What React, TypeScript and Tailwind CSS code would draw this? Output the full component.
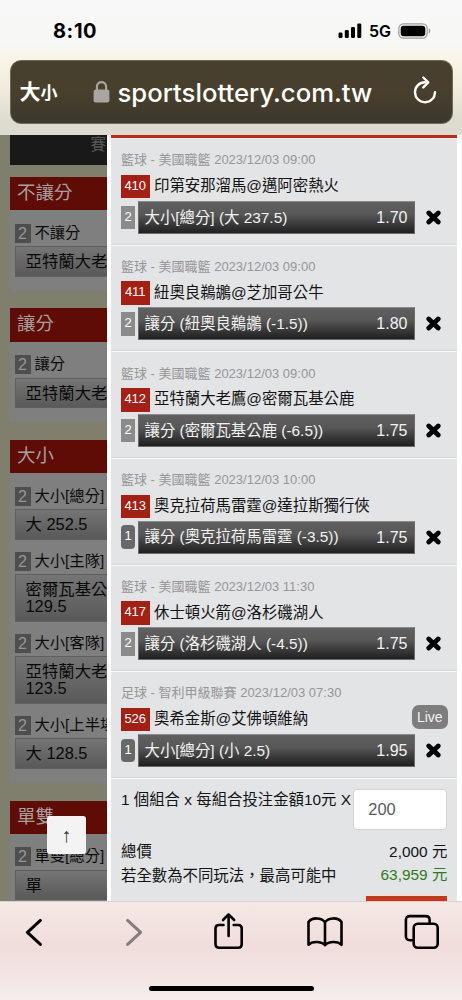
import React from 'react';

interface Bet {
  id: string;
  meta: string;
  teams: string;
  min: number;
  pick: string;
  odds: string;
  live?: boolean;
}

const bets: Bet[] = [
  { id: '410', meta: '籃球 - 美國職籃 2023/12/03 09:00', teams: '印第安那溜馬@邁阿密熱火', min: 2, pick: '大小[總分] (大 237.5)', odds: '1.70' },
  { id: '411', meta: '籃球 - 美國職籃 2023/12/03 09:00', teams: '紐奧良鵜鶘@芝加哥公牛', min: 2, pick: '讓分 (紐奧良鵜鶘 (-1.5))', odds: '1.80' },
  { id: '412', meta: '籃球 - 美國職籃 2023/12/03 09:00', teams: '亞特蘭大老鷹@密爾瓦基公鹿', min: 2, pick: '讓分 (密爾瓦基公鹿 (-6.5))', odds: '1.75' },
  { id: '413', meta: '籃球 - 美國職籃 2023/12/03 10:00', teams: '奧克拉荷馬雷霆@達拉斯獨行俠', min: 1, pick: '讓分 (奧克拉荷馬雷霆 (-3.5))', odds: '1.75' },
  { id: '417', meta: '籃球 - 美國職籃 2023/12/03 11:30', teams: '休士頓火箭@洛杉磯湖人', min: 2, pick: '讓分 (洛杉磯湖人 (-4.5))', odds: '1.75' },
  { id: '526', meta: '足球 - 智利甲級聯賽 2023/12/03 07:30', teams: '奧希金斯@艾佛頓維納', min: 1, pick: '大小[總分] (小 2.5)', odds: '1.95', live: true },
];

interface MarketItem {
  label: string;
  lines: string[];
}

const markets: { title: string; items: MarketItem[] }[] = [
  { title: '不讓分', items: [{ label: '不讓分', lines: ['亞特蘭大老'] }] },
  { title: '讓分', items: [{ label: '讓分', lines: ['亞特蘭大老'] }] },
  {
    title: '大小',
    items: [
      { label: '大小[總分]', lines: ['大 252.5'] },
      { label: '大小[主隊]', lines: ['密爾瓦基公', '129.5'] },
      { label: '大小[客隊]', lines: ['亞特蘭大老', '123.5'] },
      { label: '大小[上半場]', lines: ['大 128.5'] },
    ],
  },
  { title: '單雙', items: [{ label: '單雙[總分]', lines: ['單'] }] },
];

const StatusBar: React.FC = () => (
  <div className="flex h-[60px] items-center pl-[53px] pr-[31px] pt-[2px] text-black">
    <span className="text-[20px] font-bold leading-none tracking-[0.6px]">8:10</span>
    <svg className="ml-auto" width="24" height="16" viewBox="0 0 24 16">
      <rect x="0.5" y="9.5" width="4" height="5.5" rx="1.2" />
      <rect x="6.8" y="7" width="4" height="8" rx="1.2" />
      <rect x="13" y="4" width="4" height="11" rx="1.2" />
      <rect x="19.3" y="0.5" width="4" height="14.5" rx="1.2" />
    </svg>
    <span className="ml-[7px] text-[16px] font-semibold leading-none">5G</span>
    <svg className="ml-[7px]" width="33" height="16" viewBox="0 0 33 16">
      <rect x="0.8" y="0.8" width="28.4" height="14.4" rx="4.6" fill="none" stroke="#9b9b99" strokeWidth="1.2" />
      <rect x="2.7" y="2.7" width="24.6" height="10.6" rx="3" />
      <path d="M30.8 5.3c2 .8 2 4.6 0 5.4z" fill="#9b9b99" />
    </svg>
  </div>
);

const AddressBar: React.FC = () => (
  <div className="mx-[9.5px] flex h-[63.5px] items-center rounded-[11px] border border-[#6d6857] bg-linear-to-b from-[#47402f] via-[#483f2c] to-[#3d382d] text-white">
    <span className="-mt-[2px] ml-[9px] flex w-[42px] items-baseline font-['Noto_Sans_CJK_TC',sans-serif] font-bold leading-none">
      <span className="text-[21px]">大</span>
      <span className="text-[17px]">小</span>
    </span>
    <svg className="ml-[31px]" width="17" height="23" viewBox="0 0 17 23">
      <rect x="0.6" y="9.5" width="15.8" height="13" rx="2.2" fill="#a8a5a3" />
      <path d="M3.9 10.5V6.8c0-6.2 9.2-6.2 9.2 0v3.7" fill="none" stroke="#a8a5a3" strokeWidth="2.1" />
    </svg>
    <span className="ml-[8px] mt-[2px] whitespace-nowrap text-[25.7px] font-medium leading-none">sportslottery.com.tw</span>
    <svg className="mb-[3px] ml-auto mr-[14px]" width="26" height="28" viewBox="0 0 26 28" fill="none" stroke="#fff" strokeWidth="2.4" strokeLinecap="round" strokeLinejoin="round">
      <path d="M13 6.2A10 10 0 1 0 23 16.2" />
      <path d="M11.3 1.5 16.2 6.4 11.3 11.4" />
    </svg>
  </div>
);

const Market: React.FC<{ title: string; items: MarketItem[] }> = ({ title, items }) => (
  <section className="mb-[17.6px] w-[97.5px] shrink-0 overflow-hidden whitespace-nowrap bg-[#7f7f7f] pb-[5.9px]">
    <h2 className="h-[33.3px] bg-[#5f0b06] pl-[7.5px] text-[18.5px] leading-[32px] text-[#a5a09e]">{title}</h2>
    <div className="pt-[13.3px]">
      {items.map((item) => (
        <div key={item.label} className="mb-[8px] pb-[4.3px] pl-[5px] last:mb-[4px]">
          <div className="flex h-[19px] items-center text-[15.3px] text-[#0c0c0c]">
            <span className="mr-[4px] h-[19px] w-[16px] shrink-0 bg-[#4e4e4e] text-center text-[16px] leading-[19px] text-[#969696]">2</span>
            {item.label}
          </div>
          <div className="mt-[3.5px] border border-r-0 border-[#5f5f5f] bg-linear-to-b from-[#757575] to-[#595959] py-[6px] pl-[10px] text-[16.4px] leading-[16.6px] text-[#090909]">
            {item.lines.map((line) => (
              <div key={line}>{line}</div>
            ))}
          </div>
        </div>
      ))}
    </div>
  </section>
);

const CloseIcon: React.FC = () => (
  <svg width="15" height="15" viewBox="0 0 15 15" stroke="#000" strokeWidth="4.8" strokeLinecap="round">
    <path d="M2.8 3 12.2 12M12.2 3 2.8 12" />
  </svg>
);

const BetRow: React.FC<{ bet: Bet }> = ({ bet }) => (
  <div className="h-[106.63px] shrink-0 border-b border-[#fbfbfb] pl-[10px] pr-[9.5px] pt-[11.3px] shadow-[inset_0_-1px_0_#d4d5d7]">
    <div className="h-[20px] whitespace-nowrap text-[13px] leading-[20px] text-[#969698]">{bet.meta}</div>
    <div className="mt-[4.5px] flex h-[23.5px] items-center text-[15.4px] text-[#141414]">
      <span className="mr-[4.5px] h-[23.5px] w-[28.5px] shrink-0 bg-[#a51f14] text-center text-[13px] leading-[22px] text-white">{bet.id}</span>
      <span className="-mt-px whitespace-nowrap leading-[22px]">{bet.teams}</span>
      {bet.live && (
        <span className="-mt-[5px] ml-auto h-[24px] w-[36px] rounded-[7px] bg-[#7d7d7d] text-center text-[14px] leading-[24px] text-[#f3f3f3]">Live</span>
      )}
    </div>
    <div className="mt-[2.5px] flex h-[33px] items-center">
      <span className={`h-[23.5px] w-[14px] shrink-0 text-center text-[13px] leading-[22px] text-white ${bet.min === 1 ? 'rounded-[4px] bg-[#686868]' : 'bg-[#8b8b8b]'}`}>
        {bet.min}
      </span>
      <div className="ml-[2.5px] flex h-[33px] w-[277px] shrink-0 items-center justify-between border border-[#6a6a6a] border-t-[#8b8b8b] bg-linear-to-b from-[#606060] via-[#575757] via-40% to-[#202020] pl-[6px] pr-[6px] text-[#f2f2f2]">
        <span className="whitespace-nowrap text-[15.4px] leading-none">{bet.pick}</span>
        <span className="mt-px text-[16px] leading-none">{bet.odds}</span>
      </div>
      <div className="ml-[11.5px]">
        <CloseIcon />
      </div>
    </div>
  </div>
);

const BottomBar: React.FC = () => (
  <div className="h-[99px] border-t border-[#d8d3d2] bg-[linear-gradient(180deg,#f4e9e5_0%,#f1dddb_45%,#f2e3e1_70%,#f4eeed_100%)]">
    <div className="flex h-[60px] items-center justify-between pl-[24px] pr-[22px]">
      <svg width="20" height="30" viewBox="0 0 20 30" fill="none" stroke="#000" strokeWidth="3" strokeLinecap="round" strokeLinejoin="round">
        <path d="M16.4 3.4 3.4 15.4 16.4 27.4" />
      </svg>
      <svg className="ml-[20px]" width="20" height="30" viewBox="0 0 20 30" fill="none" stroke="#857c7c" strokeWidth="3" strokeLinecap="round" strokeLinejoin="round">
        <path d="M2.6 3.4 15.6 15.4 2.6 27.4" />
      </svg>
      <svg className="-mt-[2px] ml-[8px]" width="32" height="38" viewBox="0 0 32 38" fill="none" stroke="#000" strokeWidth="2.6" strokeLinecap="round" strokeLinejoin="round">
        <path d="M10.5 13H6.2Q2.5 13 2.5 16.2V32.3Q2.5 35.8 6.2 35.8H25.2Q28.7 35.8 28.7 32.3V16.2Q28.7 13 25.2 13H20.7" />
        <path d="M15.6 24V2.5M10 8 15.6 2.4 21.2 8" />
      </svg>
      <svg width="38" height="32" viewBox="0 0 38 32" fill="none" stroke="#000" strokeWidth="2.6" strokeLinecap="round" strokeLinejoin="round">
        <path d="M19 6.2V29.2M19 6.2C15.2 1.2 6 1.2 2.5 6V28.8C6 25 15.2 25 19 29.2C22.8 25 32 25 35.5 28.8V6C32 1.2 22.8 1.2 19 6.2Z" />
      </svg>
      <svg width="36" height="36" viewBox="0 0 36 36" fill="none" stroke="#000" strokeWidth="2.6" strokeLinejoin="round">
        <path d="M9.5 26.2H5.9Q1.9 26.2 1.9 22.2V6.1Q1.9 2.1 5.9 2.1H21.6Q25.6 2.1 25.6 6.1V9.8" />
        <rect x="9.7" y="9.8" width="24" height="24" rx="4" />
      </svg>
    </div>
    <div className="mx-auto mt-[23.5px] h-[5.5px] w-[165px] rounded-full bg-black" />
  </div>
);

const App: React.FC = () => {
  return (
    <div className="flex h-[1000px] w-[462px] flex-col overflow-hidden bg-white font-['Liberation_Sans','Noto_Sans_CJK_TC',sans-serif]">
      {/* Browser chrome */}
      <header className="h-[135px] bg-[linear-gradient(180deg,#f8f8f8_0%,#f7f7f5_33%,#f8f4e6_45%,#f1ecdd_65%,#dedbd0_88%,#dddad2_100%)] font-[Inter,sans-serif]">
        <StatusBar />
        <AddressBar />
      </header>

      <main className="relative flex h-[766px] overflow-hidden">
        {/* Dimmed odds page */}
        <div className="flex w-[107px] shrink-0 flex-col overflow-hidden bg-[#807e6c] pl-[9.5px]">
          <div className="mb-[12px] h-[30px] w-[97.5px] shrink-0 overflow-hidden bg-[#191919] pl-[81px] text-[15.4px] leading-[20px] text-[#555759]">賽</div>
          {markets.map((market) => (
            <Market key={market.title} {...market} />
          ))}
        </div>
        <button className="absolute left-[47px] top-[681px] flex h-[38px] w-[38.5px] items-center justify-center rounded-[3px] bg-[#f3f3f3] font-['Liberation_Serif',serif] text-[20px] leading-none text-[#333]">↑</button>

        {/* Bet slip */}
        <div className="ml-[4px] flex w-[346.3px] shrink-0 flex-col border-t-[3px] border-[#bd291b] bg-[#e3e4e6]">
          <div className="h-px shrink-0 bg-[#f1ecec]" />
          {bets.map((bet) => (
            <BetRow key={bet.id} bet={bet} />
          ))}
          <div className="pl-[10px] pr-[10px] pt-[10.3px] text-[15.4px] text-[#141414]">
            <div className="flex h-[41px] justify-between">
              <span className="whitespace-nowrap leading-[22px]">1 個組合 x 每組合投注金額10元 X</span>
              <div className="h-[41px] w-[94px] shrink-0 rounded-[4px] border border-[#d2d4d8] bg-white pl-[14px] text-[16.4px] leading-[39px] text-[#55585d]">200</div>
            </div>
            <div className="mt-[9.5px] flex justify-between leading-[23.7px]">
              <span>總價</span>
              <span>2,000 元</span>
            </div>
            <div className="flex justify-between leading-[23.7px]">
              <span className="font-['Noto_Sans_CJK_TC',sans-serif]">若全數為不同玩法，最高可能中</span>
              <span className="text-[#2f7a1f]">63,959 元</span>
            </div>
            <div className="ml-auto mt-[9.5px] h-[40px] w-[81px] bg-[#cb3818]" />
          </div>
        </div>
      </main>

      <BottomBar />
    </div>
  );
};

export default App;
